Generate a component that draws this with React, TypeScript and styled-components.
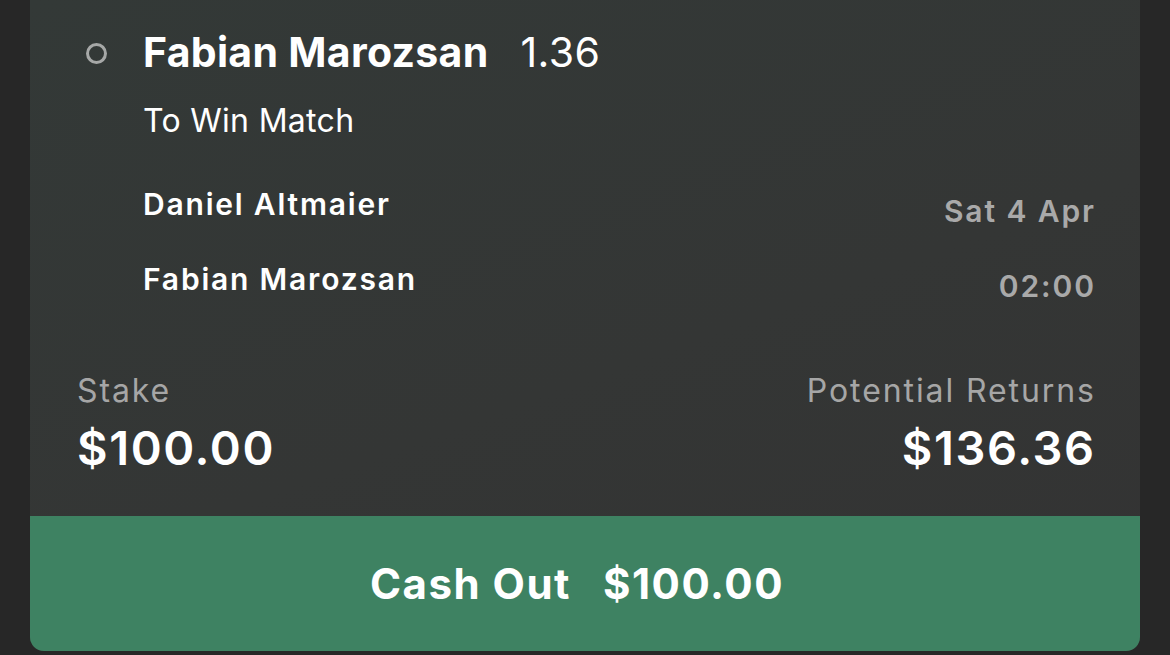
import React from "react";
import styled, { createGlobalStyle } from "styled-components";

const Global = createGlobalStyle`
  html, body { margin: 0; padding: 0; background: #272727; }
  body { font-family: Inter, "Noto Sans", sans-serif; -webkit-font-smoothing: antialiased; }
`;

const Page = styled.div`
  width: 1170px;
  height: 655px;
  padding: 0 30px 4px;
  box-sizing: border-box;
  display: flex;
  flex-direction: column;
  overflow: hidden;
`;

const Card = styled.div`
  flex: 1;
  display: flex;
  flex-direction: column;
  border-radius: 0 0 14px 14px;
  overflow: hidden;
  background: linear-gradient(160deg, #333937 0%, #343635 55%, #333333 100%);
`;

const Body = styled.div`
  flex: 1;
  padding: 30px 46px 0 47px;
  display: flex;
  flex-direction: column;
`;

const Header = styled.div`
  display: flex;
  align-items: center;
  height: 44px;
`;

const Radio = styled.span`
  width: 21px;
  height: 21px;
  box-sizing: border-box;
  border: 3px solid #a6a8a7;
  border-radius: 50%;
  margin: 2px 0 0 9px;
  flex: none;
`;

const Selection = styled.span`
  margin-left: 36px;
  font-size: 41px;
  font-weight: 700;
  color: #fff;
  letter-spacing: 0.3px;
`;

const Odds = styled.span`
  margin-left: 32px;
  font-size: 41px;
  font-weight: 400;
  color: #fff;
  letter-spacing: 0.4px;
`;

const Market = styled.div`
  margin: 29px 0 0 66px;
  height: 36px;
  line-height: 36px;
  font-size: 32px;
  color: #fff;
  letter-spacing: 0.3px;
`;

const EventGrid = styled.div`
  margin: 47px 0 0 66px;
  display: grid;
  grid-template-columns: 1fr auto;
  row-gap: 32px;
  align-items: start;
`;

const Team = styled.div`
  height: 36px;
  line-height: 36px;
  font-size: 30px;
  font-weight: 600;
  color: #fff;
  letter-spacing: 1.8px;
`;

const When = styled.div`
  height: 36px;
  line-height: 36px;
  margin: 7px -1.9px 0 0;
  font-size: 30px;
  font-weight: 600;
  color: #a9a9a9;
  text-align: right;
  letter-spacing: 1.9px;
`;

const Totals = styled.div`
  margin-top: 69px;
  display: flex;
  justify-content: space-between;
`;

const Figure = styled.div<{ $right?: boolean }>`
  display: flex;
  flex-direction: column;
  align-items: ${(p) => (p.$right ? "flex-end" : "flex-start")};
  margin-right: ${(p) => (p.$right ? "-1.8px" : "0")};
`;

const Label = styled.div`
  height: 36px;
  line-height: 36px;
  font-size: 32px;
  color: #a6a6a6;
  letter-spacing: 1.9px;
`;

const Amount = styled.div`
  margin-top: 11px;
  height: 56px;
  line-height: 56px;
  font-size: 47px;
  font-weight: 600;
  color: #fff;
  letter-spacing: 1.6px;
`;

const CashOut = styled.button`
  height: 135px;
  flex: none;
  border: none;
  padding: 0 16px 0 0;
  background: #3e8262;
  color: #fff;
  font-family: Inter, "Noto Sans", sans-serif;
  font-size: 42px;
  font-weight: 700;
  letter-spacing: 1.5px;
  display: flex;
  align-items: center;
  justify-content: center;
  gap: 32px;
  cursor: pointer;
`;

export default function App() {
  return (
    <>
      <Global />
      <Page>
        <Card>
          <Body>
            <Header>
              <Radio />
              <Selection>Fabian Marozsan</Selection>
              <Odds>1.36</Odds>
            </Header>
            <Market>To Win Match</Market>
            <EventGrid>
              <Team>Daniel Altmaier</Team>
              <When>Sat 4 Apr</When>
              <Team>Fabian Marozsan</Team>
              <When>02:00</When>
            </EventGrid>
            <Totals>
              <Figure>
                <Label>Stake</Label>
                <Amount>$100.00</Amount>
              </Figure>
              <Figure $right>
                <Label>Potential Returns</Label>
                <Amount>$136.36</Amount>
              </Figure>
            </Totals>
          </Body>
          <CashOut>
            <span>Cash Out</span>
            <span>$100.00</span>
          </CashOut>
        </Card>
      </Page>
    </>
  );
}
